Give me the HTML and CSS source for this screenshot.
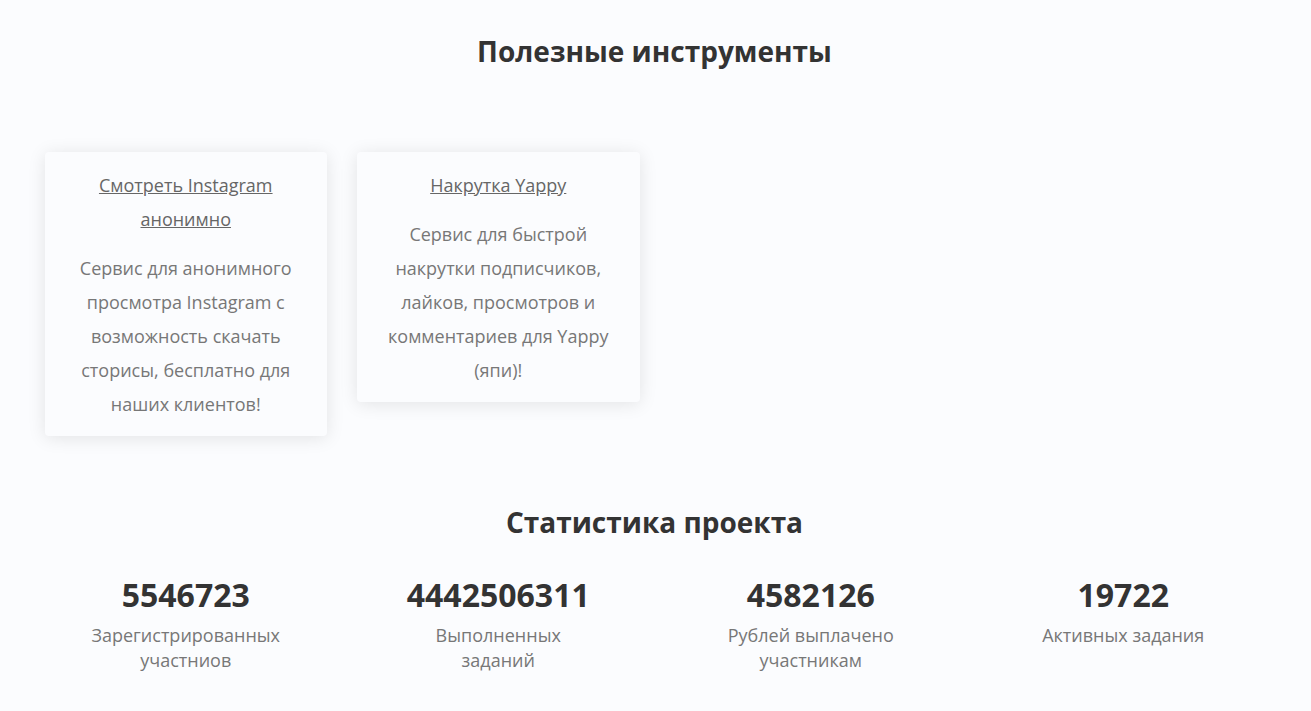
FILE: index.html
```html
<!DOCTYPE html>
<html lang="ru">
<head>
  <meta charset="UTF-8">
  <meta name="viewport" content="width=device-width, initial-scale=1.0">
  <title>Полезные инструменты</title>
  <link rel="stylesheet" href="styles.css">
</head>
<body>
  <div class="container">
    <h2 class="section-title">Полезные инструменты</h2>

    <div class="tools">
      <div class="tool-col">
        <div class="tool-card">
          <a href="#" class="tool-link">Смотреть Instagram анонимно</a>
          <p class="tool-desc">Сервис для анонимного просмотра Instagram с возможность скачать сторисы, бесплатно для наших клиентов!</p>
        </div>
      </div>
      <div class="tool-col">
        <div class="tool-card">
          <a href="#" class="tool-link">Накрутка Yappy</a>
          <p class="tool-desc">Сервис для быстрой накрутки подписчиков, лайков, просмотров и комментариев для Yappy (япи)!</p>
        </div>
      </div>
    </div>

    <h2 class="section-title stats-title">Статистика проекта</h2>

    <div class="stats">
      <div class="stat">
        <div class="stat-num">5546723</div>
        <div class="stat-label">Зарегистрированных<br>участниов</div>
      </div>
      <div class="stat">
        <div class="stat-num">4442506311</div>
        <div class="stat-label">Выполненных<br>заданий</div>
      </div>
      <div class="stat">
        <div class="stat-num">4582126</div>
        <div class="stat-label">Рублей выплачено<br>участникам</div>
      </div>
      <div class="stat">
        <div class="stat-num">19722</div>
        <div class="stat-label">Активных задания</div>
      </div>
    </div>
  </div>
</body>
</html>
```

FILE: styles.css
```css
body {
  margin: 0;
  font-family: 'Open Sans', 'Noto Sans', sans-serif;
  background-color: #fbfcfe;
  color: #333;
}
.container {
  max-width: 1250px;
  margin: 0 auto;
  padding: 0 16px 0 14px;
}
.section-title {
  text-align: center;
  font-size: 28px;
  font-weight: 700;
  color: #333;
  margin: 0;
  padding-top: 33px;
  line-height: 36px;
}
.tools {
  display: grid;
  grid-template-columns: repeat(4, 1fr);
  align-items: start;
  margin-top: 83px;
}
.tool-col {
  padding: 0 15px;
}
.tool-card {
  background: #fbfcfe;
  border-radius: 4px;
  box-shadow: 0 2px 18px rgba(0,0,0,0.1);
  padding: 16px 18px 15px;
  text-align: center;
}
.tool-link {
  display: block;
  color: #666;
  font-size: 18px;
  line-height: 34px;
  text-decoration: underline;
}
.tool-desc {
  margin: 15px 0 0;
  color: #777;
  font-size: 18px;
  line-height: 34px;
}
.stats-title {
  padding-top: 68px;
}
.stats {
  display: grid;
  grid-template-columns: repeat(4, 1fr);
  margin-top: 35px;
  padding-bottom: 40px;
}
.stat {
  text-align: center;
}
.stat-num {
  font-size: 32px;
  font-weight: 700;
  color: #333;
  line-height: 40px;
}
.stat-label {
  margin-top: 8px;
  font-size: 18px;
  line-height: 25px;
  color: #777;
}
```
